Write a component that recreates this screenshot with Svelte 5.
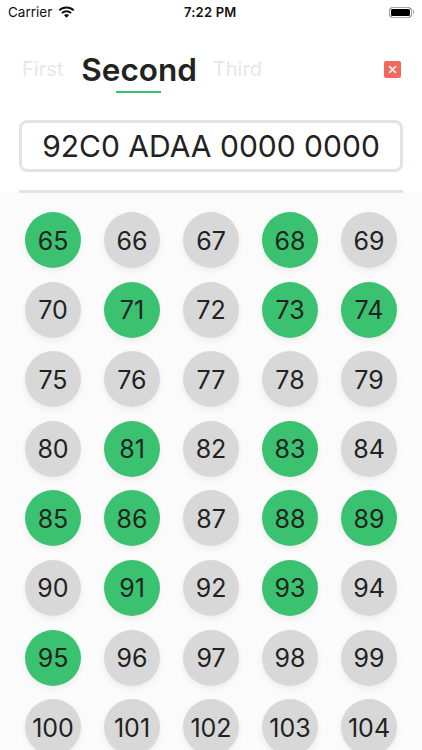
<script>
  const active = [65, 68, 71, 73, 74, 81, 83, 85, 86, 88, 89, 91, 93, 95];
  const numbers = Array.from({ length: 40 }, (_, i) => i + 65);
</script>

<div class="screen">
  <div class="status">
    <div class="left">
      <span>Carrier</span>
      <svg class="wifi" width="17" height="12" viewBox="0 0 17 12">
        <path d="M1.200 4.400A10.500 10.500 0 0 1 15.800 4.400" fill="none" stroke="#111" stroke-width="2" />
        <path d="M3.900 7.100A6.600 6.600 0 0 1 13.100 7.100" fill="none" stroke="#111" stroke-width="2" />
        <path d="M8.500 11.800L6 9.200A3.600 3.600 0 0 1 11 9.200Z" fill="#111" />
      </svg>
    </div>
    <span class="time">7:22 PM</span>
    <div class="battery"><span class="level"></span><span class="cap"></span></div>
  </div>

  <div class="tabs">
    <span class="tab">First</span>
    <span class="tab current">Second</span>
    <span class="tab last">Third</span>
    <button class="close" aria-label="Close">
      <svg width="9" height="9" viewBox="0 0 9 9">
        <path d="M1.500 1.500l6 6M7.500 1.500l-6 6" stroke="#fff" stroke-width="1.500" stroke-linecap="round" />
      </svg>
    </button>
  </div>

  <div class="field">92C0 ADAA 0000 0000</div>
  <div class="rule"></div>

  <div class="board">
    {#each numbers as n}
      <div class="ball" class:on={active.includes(n)}>{n}</div>
    {/each}
  </div>
</div>

<style>
  :global(body) {
    margin: 0;
    background: #fff;
  }

  .screen {
    width: 422px;
    height: 750px;
    overflow: hidden;
    font-family: Inter, "Liberation Sans", sans-serif;
    color: #222;
    background: #fff;
  }

  .status {
    display: flex;
    align-items: center;
    justify-content: space-between;
    height: 24px;
    padding: 0 8px;
    font-size: 13.500px;
    color: #111;
    position: relative;
  }

  .left {
    display: flex;
    align-items: center;
    gap: 6px;
  }

  .time {
    font-weight: 600;
    font-size: 13px;
    letter-spacing: 0.2px;
    position: absolute;
    left: 184px;
  }

  .battery {
    display: flex;
    align-items: center;
    gap: 1px;
  }

  .level {
    display: block;
    width: 21px;
    height: 9px;
    border: 1.500px solid #a9a9a9;
    border-radius: 3.500px;
    background: #000;
    box-shadow: inset 0 0 0 1px #fff;
  }

  .cap {
    display: block;
    width: 1px;
    height: 4px;
    background: #a9a9a9;
  }

  .tabs {
    display: flex;
    align-items: center;
    height: 90px;
    padding: 0 21px 0 22px;
    gap: 18px;
    margin-bottom: 6px;
  }

  .tab {
    position: relative;
    font-size: 20px;
    color: #e6e8e7;
  }

  .last {
    margin-left: -2px;
  }

  .current {
    font-size: 31.500px;
    font-weight: 600;
    color: #222;
  }

  .current::after {
    content: "";
    position: absolute;
    left: 35px;
    bottom: -4px;
    width: 45px;
    height: 2px;
    background: #3ac270;
  }

  .close {
    display: flex;
    align-items: center;
    justify-content: center;
    width: 17px;
    height: 17px;
    padding: 0;
    margin-left: auto;
    border: 0;
    border-radius: 2px;
    background: #ee6a5d;
  }

  .field {
    box-sizing: border-box;
    height: 52px;
    margin: 0 19px;
    border: 3px solid #e0e4e2;
    border-radius: 8px;
    font-size: 30px;
    line-height: 46px;
    text-align: center;
    color: #222;
  }

  .rule {
    height: 3px;
    margin: 18px 19px 0;
    background: #e0e4e2;
  }

  .board {
    display: grid;
    grid-template-columns: repeat(5, 56px);
    justify-content: space-between;
    row-gap: 13.600px;
    padding: 19px 25px 0;
    background: #fbfbfb;
  }

  .ball {
    box-sizing: border-box;
    display: flex;
    align-items: center;
    justify-content: center;
    width: 56px;
    height: 56px;
    padding-top: 1px;
    border-radius: 50%;
    font-size: 25px;
    color: #222;
    background: #d8d8d8;
    box-shadow: 0 3px 6px rgba(0, 0, 0, 0.06);
  }

  .on {
    background: #3ac270;
  }
</style>
